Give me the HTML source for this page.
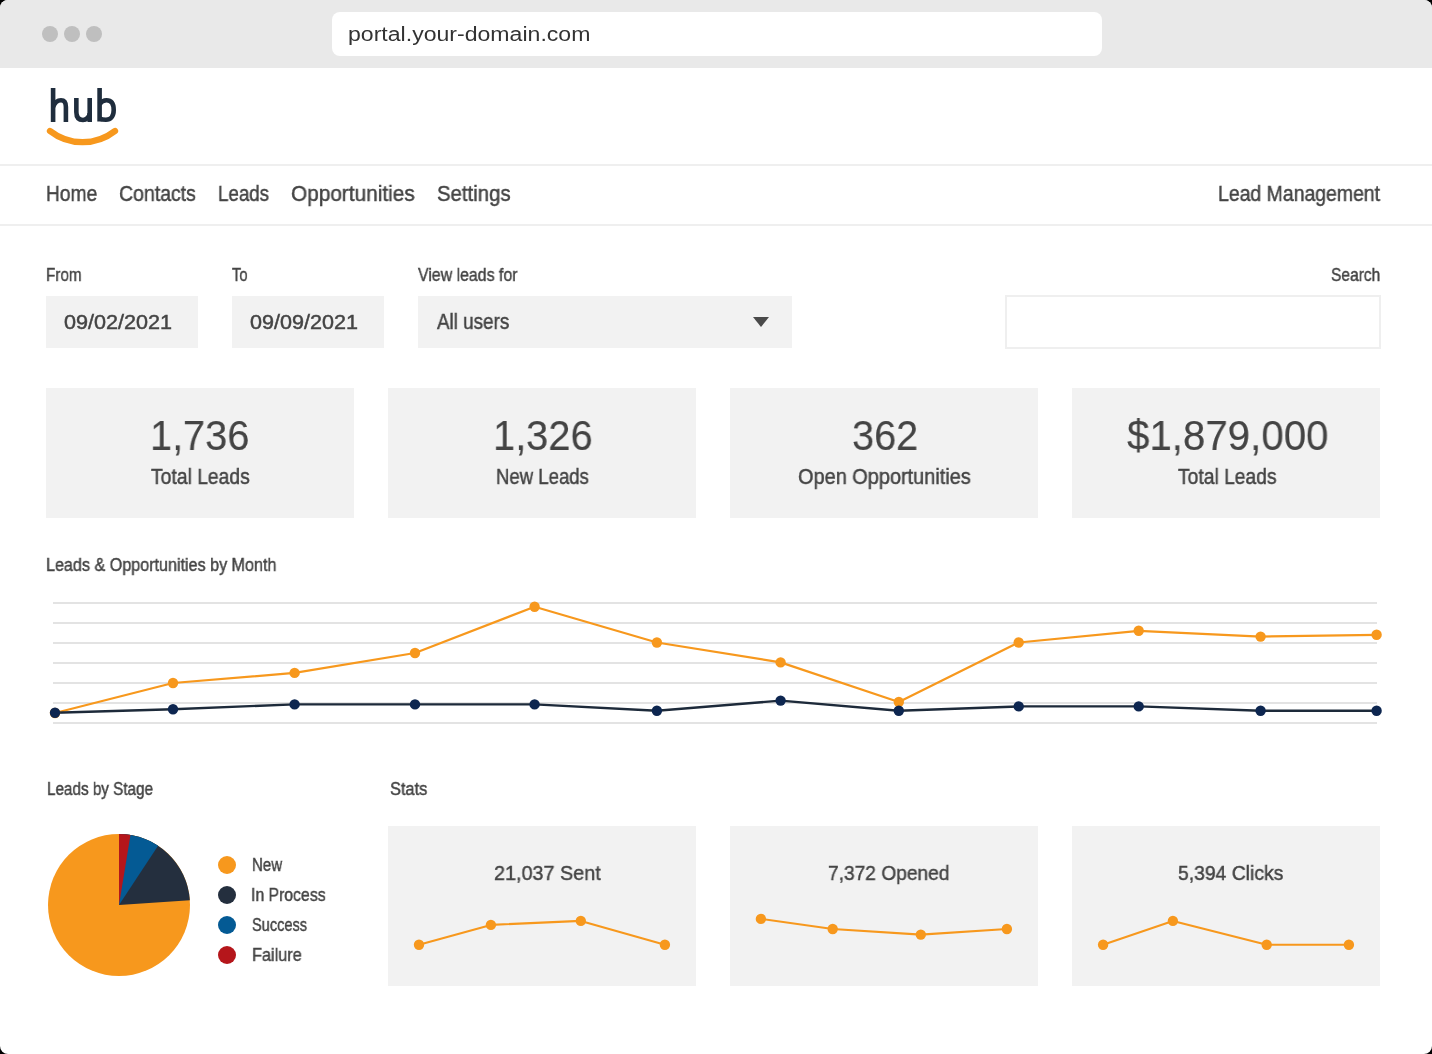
<!DOCTYPE html>
<html><head><meta charset="utf-8"><style>
html,body{margin:0;padding:0;background:#000;width:1432px;height:1054px;overflow:hidden}
#win{position:absolute;left:0;top:0;width:1432px;height:1054px;background:#fff;border-radius:8px;overflow:hidden}
.t{position:absolute;font-family:"Liberation Sans",sans-serif;white-space:pre;transform-origin:0 0;will-change:transform;-webkit-text-stroke:0.45px currentColor}
.r{position:absolute}
</style></head><body><div id="win">
<div class="r" style="left:0;top:0;width:1432px;height:68px;background:#e9e9e9"></div>
<div class="r" style="left:42px;top:26px;width:16px;height:16px;border-radius:50%;background:#bfbfbf"></div>
<div class="r" style="left:64px;top:26px;width:16px;height:16px;border-radius:50%;background:#bfbfbf"></div>
<div class="r" style="left:86px;top:26px;width:16px;height:16px;border-radius:50%;background:#bfbfbf"></div>
<div class="r" style="left:332px;top:12px;width:770px;height:44px;border-radius:8px;background:#fff"></div>
<div class="r" style="left:0;top:164px;width:1432px;height:2px;background:#efefef"></div>
<div class="r" style="left:0;top:224px;width:1432px;height:2px;background:#efefef"></div>
<div class="r" style="left:46px;top:296px;width:152px;height:52px;background:#f2f2f2"></div>
<div class="r" style="left:232px;top:296px;width:152px;height:52px;background:#f2f2f2"></div>
<div class="r" style="left:418px;top:296px;width:374px;height:52px;background:#f2f2f2"></div>
<div class="r" style="left:1005px;top:295px;width:372px;height:50px;border:2px solid #efefef;background:#fff"></div>
<div class="r" style="left:46px;top:388px;width:308px;height:130px;background:#f2f2f2"></div>
<div class="r" style="left:388px;top:388px;width:308px;height:130px;background:#f2f2f2"></div>
<div class="r" style="left:730px;top:388px;width:308px;height:130px;background:#f2f2f2"></div>
<div class="r" style="left:1072px;top:388px;width:308px;height:130px;background:#f2f2f2"></div>
<div class="r" style="left:388px;top:826px;width:308px;height:160px;background:#f2f2f2"></div>
<div class="r" style="left:730px;top:826px;width:308px;height:160px;background:#f2f2f2"></div>
<div class="r" style="left:1072px;top:826px;width:308px;height:160px;background:#f2f2f2"></div>
<svg class="r" style="left:0;top:0" width="1432" height="1054" viewBox="0 0 1432 1054">
<rect x="53" y="602" width="1324" height="2" fill="#e3e3e3"/><rect x="53" y="622" width="1324" height="2" fill="#e3e3e3"/><rect x="53" y="642" width="1324" height="2" fill="#e3e3e3"/><rect x="53" y="662" width="1324" height="2" fill="#e3e3e3"/><rect x="53" y="682" width="1324" height="2" fill="#e3e3e3"/><rect x="53" y="702" width="1324" height="2" fill="#e3e3e3"/><rect x="53" y="722" width="1324" height="2" fill="#e3e3e3"/><polyline points="55,713 173,683 294.6,672.9 415,653 534.6,606.7 656.9,642.5 780.6,662.4 898.8,702 1018.7,642.5 1138.7,630.8 1260.6,636.6 1376.6,634.8" fill="none" stroke="#f7981d" stroke-width="2.2" stroke-linejoin="round"/><polyline points="55,712.8 173,709.2 294.6,704.4 415,704.4 534.6,704.4 656.9,710.8 780.6,700.6 898.8,710.8 1018.7,706.4 1138.7,706.4 1260.6,710.8 1376.6,710.8" fill="none" stroke="#1d2a3a" stroke-width="2.4" stroke-linejoin="round"/><circle cx="55" cy="713" r="5.2" fill="#f7981d"/><circle cx="173" cy="683" r="5.2" fill="#f7981d"/><circle cx="294.6" cy="672.9" r="5.2" fill="#f7981d"/><circle cx="415" cy="653" r="5.2" fill="#f7981d"/><circle cx="534.6" cy="606.7" r="5.2" fill="#f7981d"/><circle cx="656.9" cy="642.5" r="5.2" fill="#f7981d"/><circle cx="780.6" cy="662.4" r="5.2" fill="#f7981d"/><circle cx="898.8" cy="702" r="5.2" fill="#f7981d"/><circle cx="1018.7" cy="642.5" r="5.2" fill="#f7981d"/><circle cx="1138.7" cy="630.8" r="5.2" fill="#f7981d"/><circle cx="1260.6" cy="636.6" r="5.2" fill="#f7981d"/><circle cx="1376.6" cy="634.8" r="5.2" fill="#f7981d"/><circle cx="55" cy="712.8" r="5.2" fill="#0d2650"/><circle cx="173" cy="709.2" r="5.2" fill="#0d2650"/><circle cx="294.6" cy="704.4" r="5.2" fill="#0d2650"/><circle cx="415" cy="704.4" r="5.2" fill="#0d2650"/><circle cx="534.6" cy="704.4" r="5.2" fill="#0d2650"/><circle cx="656.9" cy="710.8" r="5.2" fill="#0d2650"/><circle cx="780.6" cy="700.6" r="5.2" fill="#0d2650"/><circle cx="898.8" cy="710.8" r="5.2" fill="#0d2650"/><circle cx="1018.7" cy="706.4" r="5.2" fill="#0d2650"/><circle cx="1138.7" cy="706.4" r="5.2" fill="#0d2650"/><circle cx="1260.6" cy="710.8" r="5.2" fill="#0d2650"/><circle cx="1376.6" cy="710.8" r="5.2" fill="#0d2650"/><circle cx="119" cy="905" r="71" fill="#f7981d"/><path d="M119,905 L119.00,834.00 A71,71 0 0 1 189.84,900.29 Z" fill="#242f3e"/><path d="M119,905 L119.00,834.00 A71,71 0 0 1 158.08,845.73 Z" fill="#045a94"/><path d="M119,905 L119.00,834.00 A71,71 0 0 1 130.47,834.93 Z" fill="#b5161b"/><circle cx="227" cy="865" r="9" fill="#f7981d"/><circle cx="227" cy="895" r="9" fill="#242f3e"/><circle cx="227" cy="925" r="9" fill="#045a94"/><circle cx="227" cy="955" r="9" fill="#b5161b"/><polyline points="419,944.8 490.9,924.9 580.8,920.9 664.9,944.8" fill="none" stroke="#f7981d" stroke-width="2.1" stroke-linejoin="round"/><circle cx="419" cy="944.8" r="5.2" fill="#f7981d"/><circle cx="490.9" cy="924.9" r="5.2" fill="#f7981d"/><circle cx="580.8" cy="920.9" r="5.2" fill="#f7981d"/><circle cx="664.9" cy="944.8" r="5.2" fill="#f7981d"/><polyline points="760.9,918.9 832.7,929 920.8,934.6 1006.9,929" fill="none" stroke="#f7981d" stroke-width="2.1" stroke-linejoin="round"/><circle cx="760.9" cy="918.9" r="5.2" fill="#f7981d"/><circle cx="832.7" cy="929" r="5.2" fill="#f7981d"/><circle cx="920.8" cy="934.6" r="5.2" fill="#f7981d"/><circle cx="1006.9" cy="929" r="5.2" fill="#f7981d"/><polyline points="1103.1,944.8 1172.9,920.9 1266.7,944.8 1348.9,944.8" fill="none" stroke="#f7981d" stroke-width="2.1" stroke-linejoin="round"/><circle cx="1103.1" cy="944.8" r="5.2" fill="#f7981d"/><circle cx="1172.9" cy="920.9" r="5.2" fill="#f7981d"/><circle cx="1266.7" cy="944.8" r="5.2" fill="#f7981d"/><circle cx="1348.9" cy="944.8" r="5.2" fill="#f7981d"/><path d="M753,317 L769,317 L761,327 Z" fill="#4a4a4a"/><g fill="none" stroke="#1f2d3d" stroke-width="4.6"><path d="M53.1,88 L53.1,122"/><path d="M53.1,107 C55,102 58,100.3 61,100.3 C64.5,100.3 65.9,102.5 65.9,107 L65.9,122"/><path d="M76.35,98 L76.35,112 C76.35,118 79,120 83,120 C86,120 89.7,117 89.7,113"/><path d="M89.7,98 L89.7,122"/><path d="M99.6,88 L99.6,121.5"/><path d="M99.6,104 C102,100.8 104.5,100.3 106.5,100.3 C111,100.3 113.7,103.5 113.7,110 C113.7,116.5 110.5,119.8 106,119.8 C103.5,119.8 101.5,119.4 99.6,118.5"/></g><path d="M50,131 A52.75,52.75 0 0 0 115,131" fill="none" stroke="#f7981d" stroke-width="6.3" stroke-linecap="round"/>
</svg>
<div class="t" style="left:347.94px;top:24.20px;font-size:20px;line-height:20px;color:#333333;transform:scaleX(1.1537);-webkit-text-stroke:0">portal.your-domain.com</div>
<div class="t" style="left:46.26px;top:184.33px;font-size:21.5px;line-height:21.5px;color:#444444;transform:scaleX(0.8920)">Home</div>
<div class="t" style="left:119.12px;top:184.33px;font-size:21.5px;line-height:21.5px;color:#444444;transform:scaleX(0.9065)">Contacts</div>
<div class="t" style="left:217.90px;top:184.33px;font-size:21.5px;line-height:21.5px;color:#444444;transform:scaleX(0.8718)">Leads</div>
<div class="t" style="left:291.06px;top:184.33px;font-size:21.5px;line-height:21.5px;color:#444444;transform:scaleX(0.9666)">Opportunities</div>
<div class="t" style="left:436.58px;top:184.33px;font-size:21.5px;line-height:21.5px;color:#444444;transform:scaleX(0.9471)">Settings</div>
<div class="t" style="left:1218.21px;top:184.33px;font-size:21.5px;line-height:21.5px;color:#444444;transform:scaleX(0.9038)">Lead Management</div>
<div class="t" style="left:46.48px;top:265.97px;font-size:18.5px;line-height:18.5px;color:#444444;transform:scaleX(0.8242)">From</div>
<div class="t" style="left:232.20px;top:265.97px;font-size:18.5px;line-height:18.5px;color:#444444;transform:scaleX(0.7969)">To</div>
<div class="t" style="left:418.00px;top:265.88px;font-size:18.5px;line-height:18.5px;color:#444444;transform:scaleX(0.8584)">View leads for</div>
<div class="t" style="left:1330.89px;top:266.27px;font-size:18.5px;line-height:18.5px;color:#444444;transform:scaleX(0.8406)">Search</div>
<div class="t" style="left:63.57px;top:312.27px;font-size:20.5px;line-height:20.5px;color:#444444;transform:scaleX(1.0540)">09/02/2021</div>
<div class="t" style="left:249.80px;top:312.27px;font-size:20.5px;line-height:20.5px;color:#444444;transform:scaleX(1.0513)">09/09/2021</div>
<div class="t" style="left:436.50px;top:312.33px;font-size:21.5px;line-height:21.5px;color:#444444;transform:scaleX(0.8769)">All users</div>
<div class="t" style="left:150.45px;top:414.05px;font-size:43px;line-height:43px;color:#444444;transform:scaleX(0.9234);-webkit-text-stroke:0.15px currentColor">1,736</div>
<div class="t" style="left:492.69px;top:414.05px;font-size:43px;line-height:43px;color:#444444;transform:scaleX(0.9260);-webkit-text-stroke:0.15px currentColor">1,326</div>
<div class="t" style="left:851.59px;top:414.05px;font-size:43px;line-height:43px;color:#444444;transform:scaleX(0.9235);-webkit-text-stroke:0.15px currentColor">362</div>
<div class="t" style="left:1126.99px;top:414.05px;font-size:43px;line-height:43px;color:#444444;transform:scaleX(0.9362);-webkit-text-stroke:0.15px currentColor">$1,879,000</div>
<div class="t" style="left:151.10px;top:467.33px;font-size:21.5px;line-height:21.5px;color:#444444;transform:scaleX(0.8979)">Total Leads</div>
<div class="t" style="left:495.99px;top:467.33px;font-size:21.5px;line-height:21.5px;color:#444444;transform:scaleX(0.8633)">New Leads</div>
<div class="t" style="left:798.37px;top:467.33px;font-size:21.5px;line-height:21.5px;color:#444444;transform:scaleX(0.9266)">Open Opportunities</div>
<div class="t" style="left:1177.50px;top:467.33px;font-size:21.5px;line-height:21.5px;color:#444444;transform:scaleX(0.8961)">Total Leads</div>
<div class="t" style="left:46.12px;top:556.04px;font-size:18.3px;line-height:18.3px;color:#444444;transform:scaleX(0.8823)">Leads &amp; Opportunities by Month</div>
<div class="t" style="left:46.56px;top:779.95px;font-size:18.3px;line-height:18.3px;color:#444444;transform:scaleX(0.8342)">Leads by Stage</div>
<div class="t" style="left:389.62px;top:780.04px;font-size:18.3px;line-height:18.3px;color:#444444;transform:scaleX(0.8945)">Stats</div>
<div class="t" style="left:251.89px;top:856.07px;font-size:18.5px;line-height:18.5px;color:#444444;transform:scaleX(0.8133)">New</div>
<div class="t" style="left:251.00px;top:886.07px;font-size:18.5px;line-height:18.5px;color:#444444;transform:scaleX(0.8529)">In Process</div>
<div class="t" style="left:251.92px;top:916.07px;font-size:18.5px;line-height:18.5px;color:#444444;transform:scaleX(0.7862)">Success</div>
<div class="t" style="left:251.82px;top:946.07px;font-size:18.5px;line-height:18.5px;color:#444444;transform:scaleX(0.8806)">Failure</div>
<div class="t" style="left:493.86px;top:861.75px;font-size:21px;line-height:21px;color:#444444;transform:scaleX(0.9425)">21,037 Sent</div>
<div class="t" style="left:828.19px;top:861.75px;font-size:21px;line-height:21px;color:#444444;transform:scaleX(0.9122)">7,372 Opened</div>
<div class="t" style="left:1177.89px;top:861.75px;font-size:21px;line-height:21px;color:#444444;transform:scaleX(0.9201)">5,394 Clicks</div>
</div></body></html>
